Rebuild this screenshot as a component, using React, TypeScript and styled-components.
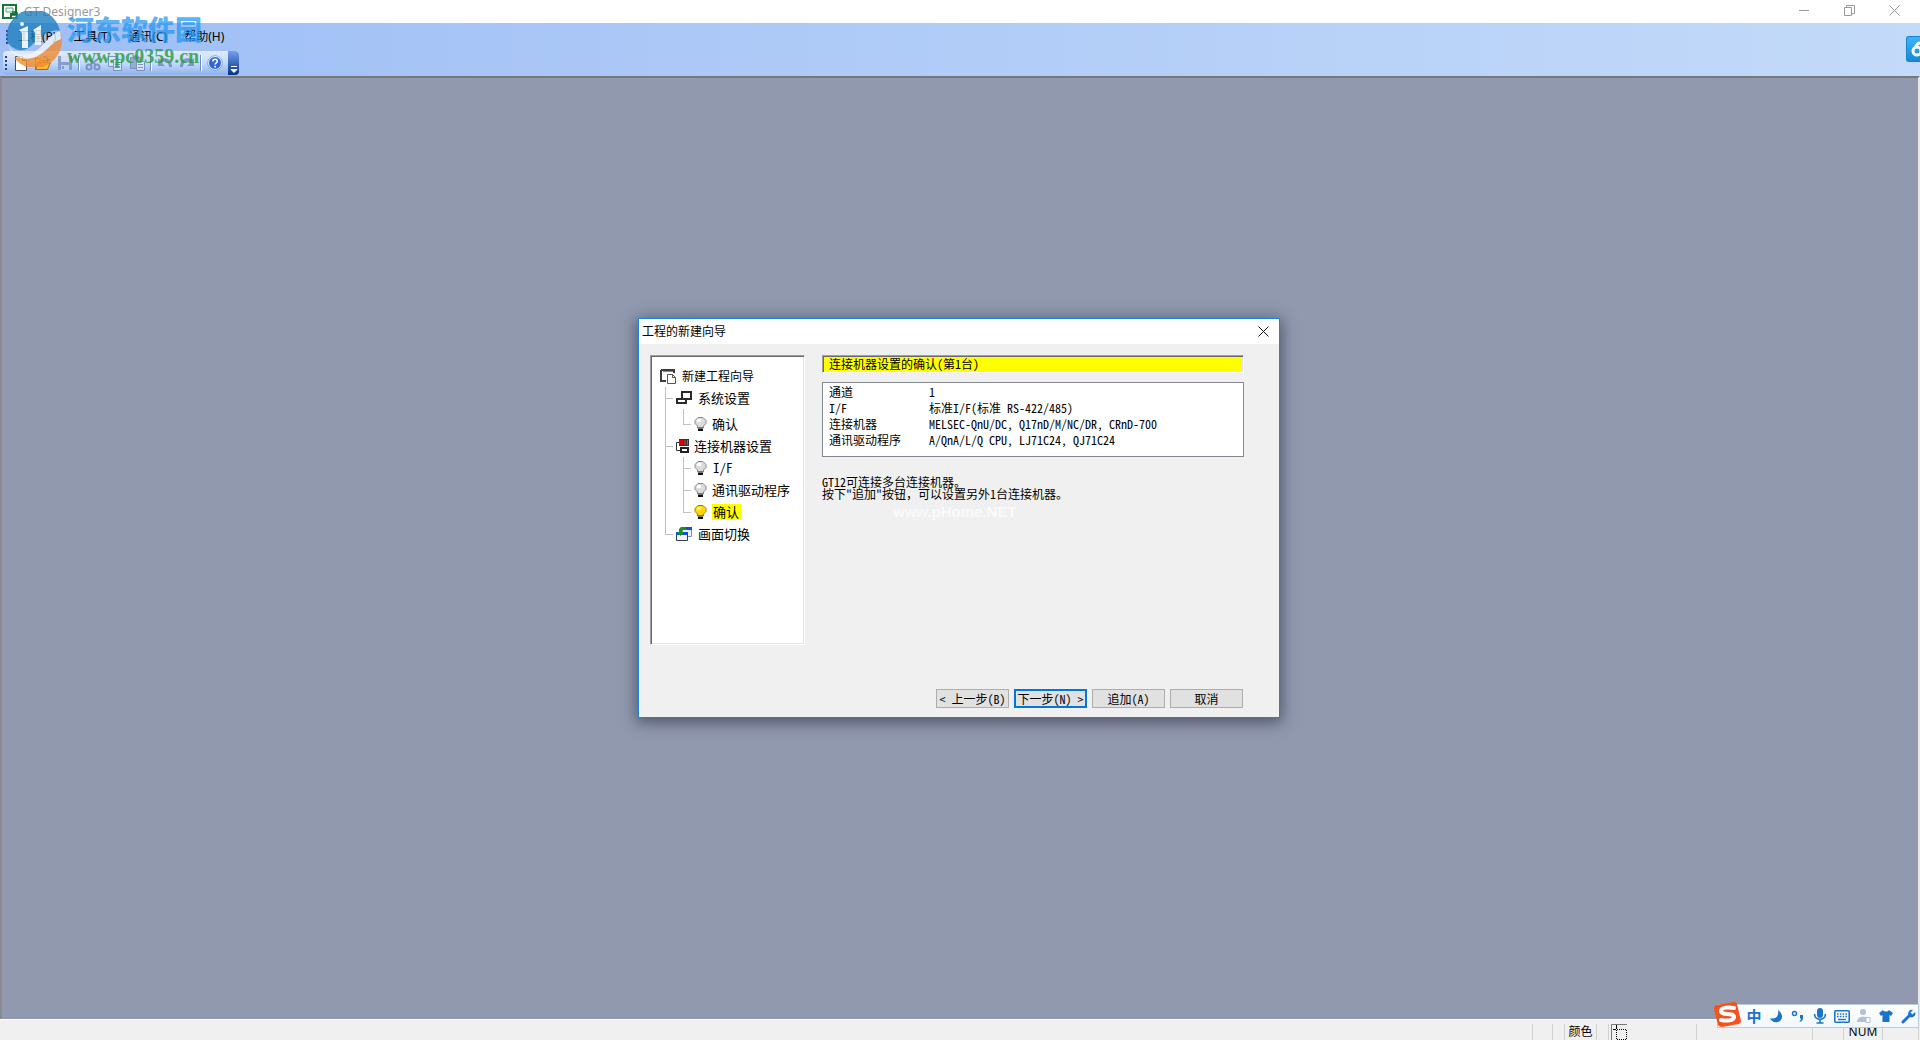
import React from "react";
import styled, { createGlobalStyle } from "styled-components";

const ui = `"Noto Sans", "Noto Sans CJK SC", sans-serif`;
const song = `"Noto Sans Mono CJK SC", "Noto Sans CJK SC", sans-serif`;

const Global = createGlobalStyle`
  * { box-sizing: border-box; }
  body { margin: 0; font: 12px/16px ${ui}; color: #000; }
  button { font: inherit; color: inherit; padding: 0; margin: 0; border: 0; background: none; }
  ul, dl, dd, dt, p, h1, h2 { margin: 0; padding: 0; list-style: none; font-size: inherit; font-weight: inherit; }
  svg { display: block; flex: none; }
`;

const Window = styled.div`
  position: relative;
  display: flex;
  flex-direction: column;
  height: 100vh;
  overflow: hidden;
  background: #f0f0f0;
`;

const TitleBar = styled.header`
  display: flex;
  align-items: center;
  height: 23px;
  padding: 0 3px 0 2px;
  gap: 6px;
  background: #fff;
  color: #999;
  flex: none;
`;

const AppTitle = styled.h1`
  flex: 1;
`;

const Controls = styled.div`
  display: flex;
  align-self: stretch;
`;

const ControlButton = styled.button`
  display: flex;
  align-items: center;
  justify-content: center;
  width: 45px;
  padding-bottom: 3px;
`;

const Bars = styled.div`
  height: 53px;
  padding: 0 3px;
  background: linear-gradient(90deg, #9ebef5, #c3daf9);
  flex: none;
`;

const Grip = styled.span`
  width: 2px;
  height: 15px;
  flex: none;
  background: repeating-linear-gradient(#27418c 0 2px, transparent 2px 4px);
`;

const MenuBar = styled.nav`
  display: flex;
  align-items: center;
  height: 28px;
  padding: 0 3px;
  gap: 10px;
`;

const Menu = styled.div`
  display: flex;
  gap: 17px;
`;

const ToolBar = styled.div`
  display: flex;
  width: 236px;
  height: 24px;
  border-radius: 4px;
  overflow: hidden;
  background: linear-gradient(#dfecff, #c4dafa 50%, #8db2ec);
`;

const Tools = styled.div`
  display: flex;
  align-items: center;
  flex: 1;
  min-width: 0;
  padding: 0 2px;
  gap: 6px;
`;

const ToolButton = styled.button<{ $dim?: boolean }>`
  width: 16px;
  height: 16px;
  flex: none;
  opacity: ${(p) => (p.$dim ? 0.85 : 1)};
`;

const ToolSeparator = styled.span`
  width: 2px;
  height: 16px;
  margin: 0 -1px;
  flex: none;
  background: linear-gradient(90deg, #6a8ccb 50%, #fff 50%);
`;

const Overflow = styled.button`
  display: flex;
  align-items: flex-end;
  justify-content: center;
  width: 11px;
  flex: none;
  background: linear-gradient(#76a0ea, #00318c);
`;

const Workspace = styled.main`
  display: flex;
  flex: 1;
  align-items: center;
  justify-content: center;
  min-height: 0;
  padding: 0 2px 61px 0;
  border-top: 2px solid #77777c;
  border-left: 2px solid #8a8a90;
  border-right: 2px solid #e8e8ea;
  background: #9199ae;
`;

const Dialog = styled.section`
  display: flex;
  flex-direction: column;
  width: 642px;
  height: 400px;
  border: 1px solid #1883d7;
  background: #f0f0f0;
  box-shadow: 0 3px 14px 2px rgba(20, 25, 45, 0.5);
`;

const DialogTitle = styled.header`
  display: flex;
  align-items: center;
  justify-content: space-between;
  height: 25px;
  padding: 0 10px 0 3px;
  background: #fff;
  flex: none;
`;

const DialogBody = styled.div`
  display: flex;
  flex: 1;
  align-items: flex-start;
  gap: 17px;
  padding: 11px 35px 0 11px;
`;

const sunken = `
  border: 1px solid;
  border-color: #a0a0a0 #fff #fff #a0a0a0;
  box-shadow: inset 1px 1px #696969, inset -1px -1px #e3e3e3;
`;

const Tree = styled.ul`
  width: 155px;
  height: 290px;
  padding: 9px 0 0 1px;
  flex: none;
  background: #fff;
  ${sunken}
`;

const TreeRow = styled.li<{ $root?: boolean; $tall?: boolean }>`
  display: flex;
  align-items: flex-end;
  height: ${(p) => (p.$tall ? 26 : 22)}px;
  padding-left: ${(p) => (p.$root ? 8 : 13)}px;
  font: ${(p) => (p.$root ? 12 : 13)}px/22px ${song};
`;

type GuideKind = "none" | "line" | "tee" | "elbow";

const guideImage: Record<GuideKind, string> = {
  none: "none",
  line: "linear-gradient(#c0c0c0, #c0c0c0) 0 0 / 1px 100% no-repeat",
  tee: "linear-gradient(#c0c0c0, #c0c0c0) 0 0 / 1px 100% no-repeat, linear-gradient(#c0c0c0, #c0c0c0) 0 calc(100% - 10px) / 8px 1px no-repeat",
  elbow: "linear-gradient(#c0c0c0, #c0c0c0) 0 0 / 1px calc(100% - 10px) no-repeat, linear-gradient(#c0c0c0, #c0c0c0) 0 calc(100% - 10px) / 8px 1px no-repeat",
};

const Guide = styled.span<{ $kind: GuideKind; $wide?: boolean }>`
  width: ${(p) => (p.$wide ? 18 : 11)}px;
  height: 100%;
  flex: none;
  background: ${(p) => guideImage[p.$kind]};
`;

const TreeIcon = styled.span<{ $w: number }>`
  display: flex;
  align-items: center;
  width: ${(p) => p.$w}px;
  height: 22px;
  flex: none;
`;

const TreeLabel = styled.span<{ $active?: boolean }>`
  height: ${(p) => (p.$active ? 16 : 22)}px;
  line-height: ${(p) => (p.$active ? 16 : 22)}px;
  margin-bottom: ${(p) => (p.$active ? 3 : 0)}px;
  padding: 0 2px 0 1px;
  white-space: nowrap;
  background: ${(p) => (p.$active ? "#ff0" : "transparent")};
`;

const Page = styled.div`
  flex: 1;
  min-width: 0;
  font: 12px/12px ${song};
`;

const PageHeading = styled.h2`
  height: 18px;
  padding-left: 6px;
  line-height: 16px;
  background: #ff0;
  ${sunken}
`;

const Summary = styled.dl`
  display: grid;
  grid-template-columns: 100px 1fr;
  grid-auto-rows: 16px;
  height: 75px;
  margin-top: 9px;
  padding: 1px 6px;
  line-height: 16px;
  white-space: pre;
  border: 1px solid #828790;
  background: #fff;
`;

const Note = styled.p`
  margin-top: 19px;
`;

const SiteMark = styled.p`
  padding: 2px 0 0 71px;
  font: bold 15px/20px "Liberation Sans", sans-serif;
  color: #fafafa;
`;

const DialogFooter = styled.footer`
  display: flex;
  justify-content: flex-end;
  gap: 5px;
  padding: 0 36px 9px 0;
`;

const PushButton = styled.button<{ $primary?: boolean }>`
  width: 73px;
  height: 19px;
  font: 12px/14px ${song};
  white-space: pre;
  text-align: center;
  background: #e1e1e1;
  border: ${(p) => (p.$primary ? "2px solid #0078d7" : "1px solid #adadad")};
`;

const StatusBar = styled.footer`
  display: flex;
  justify-content: flex-end;
  height: 21px;
  padding: 4px 1px 0 0;
  border-top: 1px solid #fff;
  flex: none;
`;

const StatusCell = styled.span<{ $w: number; $start?: boolean }>`
  display: flex;
  align-items: center;
  justify-content: ${(p) => (p.$start ? "flex-start" : "center")};
  width: ${(p) => p.$w}px;
  padding-left: ${(p) => (p.$start ? 2 : 0)}px;
  border-right: 1px solid #d2d2d2;
`;

const ImeBar = styled.div`
  position: absolute;
  right: 1px;
  bottom: 12px;
  display: flex;
  align-items: center;
  justify-content: flex-end;
  gap: 4px;
  width: 202px;
  height: 24px;
  padding-right: 1px;
  border: 1px solid #b8cbe0;
  background: linear-gradient(#fff, #f3f7fb);
`;

const ImeButton = styled.button`
  display: flex;
  align-items: center;
  justify-content: center;
  width: 18px;
  height: 18px;
  color: #1c74c8;
  font: bold 15px/18px "Noto Sans CJK SC", sans-serif;
`;

const ImeLogo = styled.span`
  position: absolute;
  left: -5px;
  top: -4px;
`;

const CloudTab = styled.button`
  position: absolute;
  right: 0;
  top: 36px;
  width: 14px;
  height: 26px;
  border: 1px solid #1684cc;
  border-right: 0;
  border-radius: 3px 0 0 3px;
  background: linear-gradient(#3db4f5, #1588dc);
`;

const Watermark = styled.div`
  position: absolute;
  left: 6px;
  top: 11px;
  display: flex;
  gap: 5px;
  pointer-events: none;
`;

const MarkText = styled.div`
  padding-top: 2px;
`;

const MarkName = styled.div`
  font: 900 27px/32px "Noto Sans CJK SC", sans-serif;
  color: #2196f3;
  opacity: 0.72;
`;

const MarkUrl = styled.div`
  font: bold 20px/22px "Liberation Serif", serif;
  color: #2a9a3c;
  opacity: 0.8;
`;

const AppIcon = () => (
  <svg width="16" height="16" viewBox="0 0 16 16">
    <path d="M1 1h13v9H9v4H1z" fill="#fff" stroke="#12783c" strokeWidth="2" />
    <path d="M4 4h7v4H4z" fill="#e8fff0" stroke="#55a878" />
    <path d="M10 8h5M10 11h5M10 14h5M15 8v7" stroke="#0f6a33" strokeWidth="1.5" />
  </svg>
);

const RootIcon = () => (
  <svg width="16" height="16" viewBox="0 0 16 16">
    <path d="M1 2h13v3M1 2v11h5" fill="none" stroke="#3c3c3c" strokeWidth="2" />
    <path d="M3 3.500h10" stroke="#888" />
    <path d="M7.500 6.500h5l3 3v6h-8z" fill="#fff" stroke="#555" />
    <path d="M12.500 6.500v3h3" fill="none" stroke="#555" />
  </svg>
);

const SystemIcon = () => (
  <svg width="17" height="16" viewBox="0 0 17 16">
    <path d="M6 2h9v7H6z" fill="#fff" stroke="#2a2a2a" strokeWidth="2" />
    <path d="M1 9h9v4H1z" fill="#fff" stroke="#2a2a2a" strokeWidth="2" />
  </svg>
);

const DeviceIcon = () => (
  <svg width="14" height="16" viewBox="0 0 14 16">
    <path d="M3 1h10v7H3z" fill="#333" />
    <path d="M3 2h4v5H3z" fill="#e00000" />
    <path d="M8 2h2v5H8z" fill="#8a3a30" />
    <path d="M11 2h1v5h-1z" fill="#777" />
    <path d="M3 4.500H.5v8H4" fill="none" stroke="#333" />
    <path d="M5 10h7v4H5z" fill="#fff" stroke="#222" strokeWidth="2" />
  </svg>
);

const Bulb = ({ on }: { on?: boolean }) => (
  <svg width="13" height="16" viewBox="0 0 13 16">
    <path d="M4 1.500h5l3 3v3L9.500 10v2h-6v-2L1 7.500v-3z" fill={on ? "#ffd800" : "#dcdcdc"} stroke={on ? "#a08000" : "#888"} />
    <path d="M4 3h3v3H3V4z" fill={on ? "#fff48a" : "#fff"} />
    <path d="M4 11h5v2H4z" fill="#777" />
    <path d="M4 13h5v2H4z" fill="#111" />
  </svg>
);

const ScreenIcon = () => (
  <svg width="17" height="16" viewBox="0 0 17 16">
    <path d="M6.500 1.500h9v9h-9z" fill="#eef3ff" stroke="#8090b0" />
    <path d="M7 1h9v3H7z" fill="#1450e0" />
    <path d="M.5 6.500h11v8H.5z" fill="#f4f7ff" stroke="#333c50" />
    <path d="M0 6h12v3H0z" fill="#1450e0" />
    <path d="M1 6l3.500 4L8 6H6V4h4V1H5L3 3v3z" fill="#15941b" />
  </svg>
);

const NewIcon = () => (
  <svg width="16" height="16" viewBox="0 0 16 16">
    <path d="M2.500 1.500h7l4 4v10h-11z" fill="#fff" stroke="#444c60" />
    <path d="M9.500 1.500v4h4" fill="#dde4f0" stroke="#444c60" />
  </svg>
);

const OpenIcon = () => (
  <svg width="16" height="16" viewBox="0 0 16 16">
    <path d="M.5 14.500v-11h5l1 2h6v9z" fill="#ffd76a" stroke="#a06a10" />
    <path d="M.5 14.500l3-7h12l-3 7z" fill="#ffb82e" stroke="#a06a10" />
    <path d="M8 2.500c3-2 5 0 5 3M11 4l2 2 2-2" fill="none" stroke="#2050a8" />
  </svg>
);

const SaveIcon = () => (
  <svg width="16" height="16" viewBox="0 0 16 16">
    <path d="M1 1h14v14H1z" fill="#7d95c4" />
    <path d="M4 1h8v6H4z" fill="#d3def4" />
    <path d="M4 10h8v5H4z" fill="#c0cdea" />
    <path d="M5 11h2v3H5z" fill="#7d95c4" />
  </svg>
);

const CutIcon = () => (
  <svg width="16" height="16" viewBox="0 0 16 16" fill="none" stroke="#7089bd" strokeWidth="2">
    <path d="M2 3l9 7M14 3l-9 7" />
    <circle cx="4" cy="12" r="2.500" />
    <circle cx="12" cy="12" r="2.500" />
  </svg>
);

const CopyIcon = () => (
  <svg width="16" height="16" viewBox="0 0 16 16" fill="#dbe6f9" stroke="#7089bd">
    <path d="M1.500 1.500h8v10h-8z" />
    <path d="M6.500 4.500h8v11h-8zM8 7.500h5M8 9.500h5M8 11.500h5" />
  </svg>
);

const PasteIcon = () => (
  <svg width="16" height="16" viewBox="0 0 16 16" stroke="#7089bd">
    <path d="M1.500 2.500h10v11h-10z" fill="#8ea5d0" />
    <path d="M4 1h5v3H4z" fill="#7089bd" />
    <path d="M7.500 6.500h8v9h-8zM9 9.500h5M9 12.500h5" fill="#dbe6f9" />
  </svg>
);

const UndoIcon = ({ flip }: { flip?: boolean }) => (
  <svg width="16" height="16" viewBox="0 0 16 16">
    <path
      d={flip ? "M15 3v8H8l3-3C8 5 4 7 4 12H1C1 4 8 1 13 5z" : "M1 3v8h7L5 8c3-3 7-1 7 4h3C15 4 8 1 3 5z"}
      fill="#6f8bc4"
    />
  </svg>
);

const HelpIcon = () => (
  <svg width="16" height="16" viewBox="0 0 16 16">
    <circle cx="8" cy="8" r="6.500" fill="#2f66d8" stroke="#fff" strokeWidth="1" />
    <circle cx="8" cy="8" r="7.300" fill="none" stroke="#5a83cf" strokeWidth=".6" />
    <path d="M5.800 6.500c0-3 4.500-3 4.500-.3 0 1.600-2.200 1.600-2.200 3.300M8.100 10.800v1.600" fill="none" stroke="#fff" strokeWidth="1.600" />
  </svg>
);

const GridIcon = () => (
  <svg width="16" height="16" viewBox="0 0 16 16" fill="none">
    <path d="M.5 16V.5H16" stroke="#777" />
    <path d="M2 5.500h14M5.500 2v4M5.500 6v10M15.500 6v10M6 15.500h10" stroke="#000" strokeDasharray="1 1" />
    <path d="M5.500 1v4M2 5.500h3" stroke="#000" />
  </svg>
);

const SogouLogo = () => (
  <svg width="28" height="27" viewBox="0 0 28 27">
    <path d="M3 4L21 1q2 0 3 2l4 17q0 2-2 3L9 26q-3 0-4-2L1 8q0-3 2-4z" fill="#f4511e" />
    <path d="M21 7c-5-1-13-1-13 3 0 5 13 1 13 6 0 4-8 4-13 3" fill="none" stroke="#fff" strokeWidth="4" strokeLinecap="round" />
  </svg>
);

const MoonIcon = () => (
  <svg width="14" height="14" viewBox="0 0 14 14"><path d="M9 1c5 4 5 8 2 11-3 2-8 2-10-3 6 2 9-2 8-8z" fill="currentColor" /></svg>
);

const PunctIcon = () => (
  <svg width="14" height="14" viewBox="0 0 14 14">
    <circle cx="3.500" cy="4.500" r="2" fill="none" stroke="currentColor" strokeWidth="1.500" />
    <path d="M9 6h3v3c0 2-1 3-3 4l-.5-1c1-.7 1.500-1.300 1.500-2.500H9z" fill="currentColor" />
  </svg>
);

const MicIcon = () => (
  <svg width="14" height="16" viewBox="0 0 14 16">
    <rect x="4" y="0" width="6" height="10" rx="3" fill="currentColor" />
    <path d="M1.500 6c0 7 11 7 11 0M7 11v4M3.500 15h7" fill="none" stroke="currentColor" strokeWidth="1.600" />
  </svg>
);

const KeyboardIcon = () => (
  <svg width="16" height="13" viewBox="0 0 16 13">
    <rect x=".8" y=".8" width="14.400" height="11.400" rx="1" fill="#fff" stroke="currentColor" strokeWidth="1.600" />
    <path d="M3 4h10M3 6.500h10" stroke="currentColor" strokeWidth="1.500" strokeDasharray="1.600 1.200" />
    <path d="M4 9.500h8" stroke="currentColor" strokeWidth="1.500" />
  </svg>
);

const UserIcon = () => (
  <svg width="14" height="16" viewBox="0 0 14 16">
    <circle cx="6" cy="4" r="3" fill="#b3bfd4" />
    <path d="M0 14c0-7 12-7 12 0z" fill="#b3bfd4" />
    <path d="M9 9.500h4v5H9z" fill="#fff" stroke="#b3bfd4" />
  </svg>
);

const ShirtIcon = () => (
  <svg width="14" height="14" viewBox="0 0 14 14"><path d="M4 1c1 2 5 2 6 0l4 3-2 3-1.500-1v7h-7V6L2 7 0 4z" fill="currentColor" /></svg>
);

const WrenchIcon = () => (
  <svg width="15" height="15" viewBox="0 0 15 15">
    <path d="M2 13l7-7" stroke="currentColor" strokeWidth="3" strokeLinecap="round" />
    <path d="M12 1L9.500 3.500l2 2L14 3c2 4-3 7-6 4.500C6 4 8 0 12 1z" fill="currentColor" />
  </svg>
);

const MarkLogo = () => (
  <svg width="56" height="56" viewBox="0 0 56 56" opacity=".8">
    <path d="M1 31A27 27 0 0 1 54 20C46 18 36 23 27 33 19 42 9 41 1 31z" fill="#1f80c0" />
    <path d="M54 20A27 27 0 0 1 8 47C27 45 36 34 55 28z" fill="#f08c30" />
    <path d="M1 29C4 45 19 47 31 39 39 34 42 24 54 20l1 8C45 31 39 44 26 47 12 50 3 42 1 29z" fill="#f1f6fa" />
    <path d="M13 19l9-4v22h-6V22zM27 19l8-5v20h-6V22z" fill="#fff" />
    <circle cx="16" cy="13" r="2" fill="#fff" />
  </svg>
);

type Row = { label: string; icon: React.ReactNode; w: number; guides: GuideKind[]; tall?: boolean; active?: boolean };

const rows: Row[] = [
  { label: "新建工程向导", icon: <RootIcon />, w: 21, guides: [] },
  { label: "系统设置", icon: <SystemIcon />, w: 21, guides: ["tee"] },
  { label: "确认", icon: <Bulb />, w: 17, guides: ["line", "elbow"], tall: true },
  { label: "连接机器设置", icon: <DeviceIcon />, w: 17, guides: ["tee"] },
  { label: "I/F", icon: <Bulb />, w: 18, guides: ["line", "tee"] },
  { label: "通讯驱动程序", icon: <Bulb />, w: 17, guides: ["line", "tee"] },
  { label: "确认", icon: <Bulb on />, w: 18, guides: ["line", "elbow"], active: true },
  { label: "画面切换", icon: <ScreenIcon />, w: 21, guides: ["elbow"] },
];

const summary = [
  ["通道", "1"],
  ["I/F", "标准I/F(标准 RS-422/485)"],
  ["连接机器", "MELSEC-QnU/DC, Q17nD/M/NC/DR, CRnD-700"],
  ["通讯驱动程序", "A/QnA/L/Q CPU, LJ71C24, QJ71C24"],
];

const ime: [string, React.ReactNode][] = [
  ["中文", "中"],
  ["半角", <MoonIcon />],
  ["标点", <PunctIcon />],
  ["语音", <MicIcon />],
  ["键盘", <KeyboardIcon />],
  ["用户", <UserIcon />],
  ["皮肤", <ShirtIcon />],
  ["设置", <WrenchIcon />],
];

export default function App() {
  return (
    <>
      <Global />
      <Window>
        <TitleBar>
          <AppIcon />
          <AppTitle>GT Designer3</AppTitle>
          <Controls>
            <ControlButton aria-label="最小化">
              <svg width="11" height="11" stroke="#999"><path d="M0 5.500h10" /></svg>
            </ControlButton>
            <ControlButton aria-label="还原">
              <svg width="11" height="11" fill="none" stroke="#999"><path d="M.5 2.500h7v8h-7zM2.500 2.500v-2h8v8h-3" /></svg>
            </ControlButton>
            <ControlButton aria-label="关闭">
              <svg width="11" height="11" stroke="#999"><path d="M.5.5l10 10M10.500.5l-10 10" /></svg>
            </ControlButton>
          </Controls>
        </TitleBar>

        <Bars>
          <MenuBar>
            <Grip />
            <Menu>
              {["工程(P)", "工具(T)", "通讯(C)", "帮助(H)"].map((m) => (
                <button key={m}>{m}</button>
              ))}
            </Menu>
          </MenuBar>
          <ToolBar>
            <Tools>
              <Grip />
              <ToolButton aria-label="新建"><NewIcon /></ToolButton>
              <ToolButton aria-label="打开"><OpenIcon /></ToolButton>
              <ToolButton aria-label="保存" $dim><SaveIcon /></ToolButton>
              <ToolSeparator />
              <ToolButton aria-label="剪切" $dim><CutIcon /></ToolButton>
              <ToolButton aria-label="复制" $dim><CopyIcon /></ToolButton>
              <ToolButton aria-label="粘贴" $dim><PasteIcon /></ToolButton>
              <ToolSeparator />
              <ToolButton aria-label="撤销" $dim><UndoIcon /></ToolButton>
              <ToolButton aria-label="重做" $dim><UndoIcon flip /></ToolButton>
              <ToolSeparator />
              <ToolButton aria-label="帮助"><HelpIcon /></ToolButton>
            </Tools>
            <Overflow aria-label="更多">
              <svg width="9" height="10"><path d="M2 1.500h6M2 4.500h6l-3 3z" stroke="#fff" fill="#fff" /></svg>
            </Overflow>
          </ToolBar>
        </Bars>

        <Workspace>
          <Dialog role="dialog" aria-label="工程的新建向导">
            <DialogTitle>
              <h2>工程的新建向导</h2>
              <button aria-label="关闭对话框">
                <svg width="11" height="11" stroke="#111"><path d="M.5.5l10 10M10.500.5l-10 10" /></svg>
              </button>
            </DialogTitle>
            <DialogBody>
              <Tree>
                {rows.map((r, i) => (
                  <TreeRow key={i} $root={r.guides.length === 0} $tall={r.tall}>
                    {r.guides.map((g, k) => (
                      <Guide key={k} $kind={g} $wide={k < r.guides.length - 1} />
                    ))}
                    <TreeIcon $w={r.w}>{r.icon}</TreeIcon>
                    <TreeLabel $active={r.active}>{r.label}</TreeLabel>
                  </TreeRow>
                ))}
              </Tree>
              <Page>
                <PageHeading>连接机器设置的确认(第1台)</PageHeading>
                <Summary>
                  {summary.map(([k, v]) => (
                    <React.Fragment key={k}>
                      <dt>{k}</dt>
                      <dd>{v}</dd>
                    </React.Fragment>
                  ))}
                </Summary>
                <Note>
                  GT12可连接多台连接机器。
                  <br />
                  按下"追加"按钮，可以设置另外1台连接机器。
                </Note>
                <SiteMark>www.pHome.NET</SiteMark>
              </Page>
            </DialogBody>
            <DialogFooter>
              <PushButton>{"< 上一步(B)"}</PushButton>
              <PushButton $primary>{"下一步(N) >"}</PushButton>
              <PushButton>追加(A)</PushButton>
              <PushButton>取消</PushButton>
            </DialogFooter>
          </Dialog>
        </Workspace>

        <StatusBar>
          <StatusCell $w={20} />
          <StatusCell $w={20} />
          <StatusCell $w={12} />
          <StatusCell $w={32}>颜色</StatusCell>
          <StatusCell $w={12} />
          <StatusCell $w={88} $start>
            <GridIcon />
          </StatusCell>
          <StatusCell $w={116} />
          <StatusCell $w={31} />
          <StatusCell $w={39}>NUM</StatusCell>
          <StatusCell $w={36} />
        </StatusBar>

        <ImeBar>
          <ImeLogo><SogouLogo /></ImeLogo>
          {ime.map(([name, icon]) => (
            <ImeButton key={name} aria-label={name}>{icon}</ImeButton>
          ))}
        </ImeBar>

        <CloudTab aria-label="云盘">
          <svg width="13" height="24" fill="none" stroke="#fff" strokeWidth="3">
            <circle cx="10" cy="14" r="4" />
            <path d="M9 10c0-2 2-4 4-4" />
          </svg>
        </CloudTab>

        <Watermark>
          <MarkLogo />
          <MarkText>
            <MarkName>河东软件园</MarkName>
            <MarkUrl>www.pc0359.cn</MarkUrl>
          </MarkText>
        </Watermark>
      </Window>
    </>
  );
}
